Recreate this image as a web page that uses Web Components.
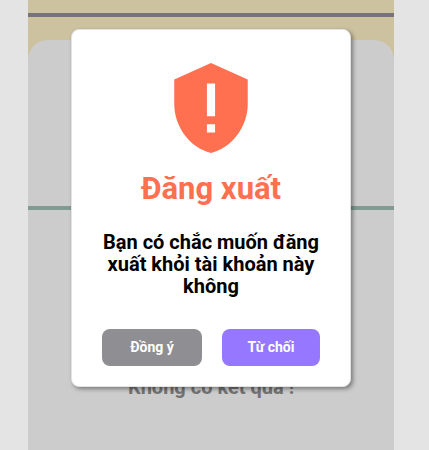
<!DOCTYPE html>
<html lang="vi">
<head>
<meta charset="utf-8">
<meta name="viewport" content="width=device-width, initial-scale=1">
<title>Đăng xuất</title>
<style>
  body { margin: 0; background: #e4e4e4; font-family: Roboto, "Noto Sans", sans-serif; }
</style>
</head>
<body>
<app-screen>
  <result-panel>Không có kết quả !</result-panel>
  <confirm-dialog slot="overlay">
    <shield-icon slot="icon"></shield-icon>
    <span slot="title">Đăng xuất</span>
    <span slot="message">Bạn có chắc muốn đăng xuất khỏi tài khoản này không</span>
    <action-button slot="actions" style="--fill: #8f8e93; --grow: 101">Đồng ý</action-button>
    <action-button slot="actions" style="--fill: #9578ff; --grow: 99">Từ chối</action-button>
  </confirm-dialog>
</app-screen>
<script>
  const define = (name, html) => customElements.define(name, class extends HTMLElement {
    constructor() {
      super();
      const template = document.createElement('template');
      template.innerHTML = html;
      this.attachShadow({ mode: 'open' }).append(template.content.cloneNode(true));
    }
  });

  define('app-screen', `
    <style>
      :host { display: block; padding: 0 35px 0 28px; }
      .page { position: relative; display: flex; flex-direction: column; min-height: 100vh; background: #cdc2a0; }
      header { height: 13px; border-bottom: 4px solid #77737a; margin-bottom: 23px; flex: none; }
      main { flex: 1; display: flex; }
      .overlay { position: absolute; inset: 0; display: flex; justify-content: center; align-items: flex-start; padding-top: 29px; }
    </style>
    <div class="page">
      <header></header>
      <main><slot></slot></main>
      <div class="overlay"><slot name="overlay"></slot></div>
    </div>`);

  define('result-panel', `
    <style>
      :host { display: block; flex: 1; background: #ccc; border-radius: 20px 20px 0 0; }
      .top { height: 166px; border-bottom: 4px solid #819b92; }
      p { margin: 165px 0 0; text-align: center; font-size: 20px; line-height: 24px; font-weight: 700; color: #737373; }
    </style>
    <div class="top"></div>
    <p><slot></slot></p>`);

  define('confirm-dialog', `
    <style>
      :host { display: block; width: 76.5%; }
      section { box-sizing: border-box; padding: 29px 30px 20px 30px; background: #fff; border: 1px solid #e3e3e3; border-radius: 8px; box-shadow: 2px 2px 4px rgba(0, 0, 0, .4); display: flex; flex-direction: column; text-align: center; }
      .icon { display: flex; justify-content: center; }
      h1 { margin: 13px 0 0; font-size: 31px; line-height: 38px; font-weight: 700; color: #ff7050; }
      p { margin: 23px 0 0; font-size: 20px; line-height: 22px; font-weight: 700; color: #000; }
      .actions { display: flex; gap: 20px; margin-top: 32px; }
    </style>
    <section role="dialog" aria-modal="true" aria-labelledby="title" aria-describedby="message">
      <div class="icon"><slot name="icon"></slot></div>
      <h1 id="title"><slot name="title"></slot></h1>
      <p id="message"><slot name="message"></slot></p>
      <div class="actions"><slot name="actions"></slot></div>
    </section>`);

  define('shield-icon', `
    <style>
      :host { display: block; }
      svg { display: block; width: 98px; height: 98px; fill: #ff7050; }
    </style>
    <svg viewBox="0 0 24 24" aria-hidden="true">
      <path fill-rule="evenodd" d="M12 1 3 5v6c0 5.55 3.84 10.74 9 12 5.16-1.26 9-6.45 9-12V5zM11 6h2v8h-2zM11 16h2v2h-2z"/>
    </svg>`);

  define('action-button', `
    <style>
      :host { display: flex; flex: var(--grow) 1 0; }
      button { flex: 1; height: 37px; padding: 0 0 2px; border: 0; border-radius: 8px; background: var(--fill); color: #fff; font: 700 14px/16px Roboto, "Noto Sans", sans-serif; cursor: pointer; }
    </style>
    <button type="button"><slot></slot></button>`);
</script>
</body>
</html>
